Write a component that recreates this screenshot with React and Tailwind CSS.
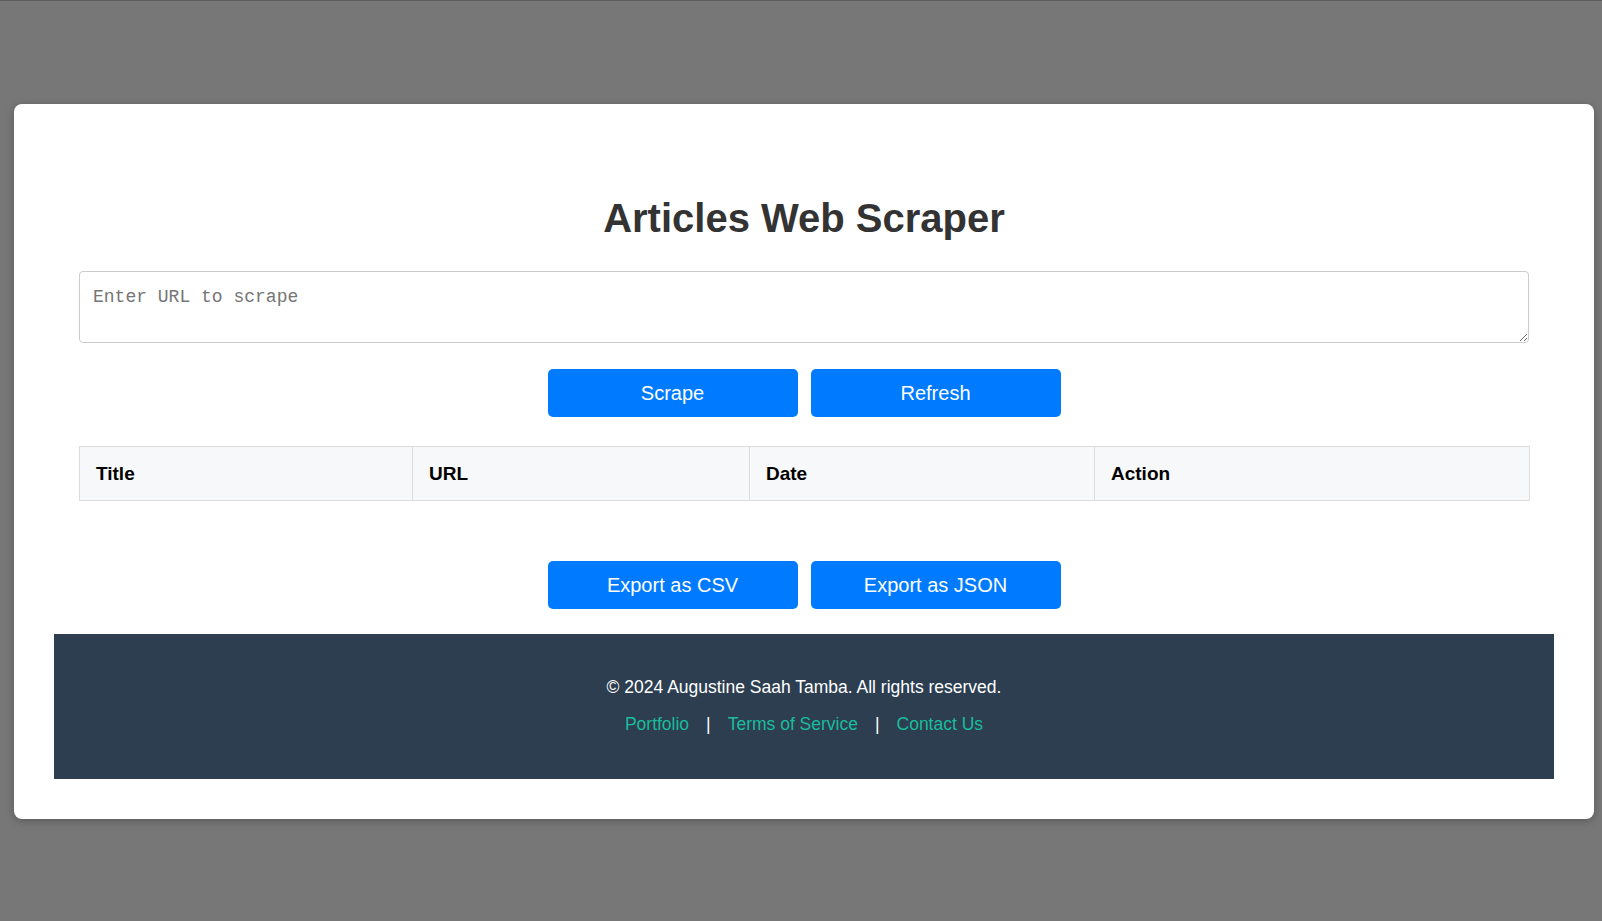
import { useState } from "react"

const columns = [
  { label: "Title", width: "w-[333px]" },
  { label: "URL", width: "w-[337px]" },
  { label: "Date", width: "w-[345px]" },
  { label: "Action", width: "w-[435px]" },
]

function BlueButton({ children }) {
  return (
    <button
      type="button"
      className="h-[48px] w-[250px] rounded-[5px] bg-[#007bff] text-[20px] text-white hover:bg-[#0069d9]"
    >
      {children}
    </button>
  )
}

export default function App() {
  const [url, setUrl] = useState("")

  return (
    <div className="min-h-[921px] border-t border-[#5c5c5c] bg-[#777777] pt-[103px] font-['Liberation_Sans',Arial,sans-serif]">
      <div className="ml-[14px] w-[1580px] rounded-[8px] bg-white p-[40px] shadow-[0_2px_8px_rgba(0,0,0,0.25)]">
        <h1 className="mt-[51px] text-center text-[40px] font-bold leading-[46px] text-[#333333]">
          Articles Web Scraper
        </h1>

        <div className="mx-[25px] mt-[30px]">
          <textarea
            value={url}
            onChange={(event) => setUrl(event.target.value)}
            placeholder="Enter URL to scrape"
            className="block h-[72px] w-full rounded-[4px] border border-[#cccccc] px-[13px] pb-[10px] pt-[14px] font-['Liberation_Mono',monospace] text-[18px] leading-[22px] text-[#333] placeholder:text-[#757575] focus:outline-none"
          />
        </div>

        <div className="mt-[26px] flex justify-center gap-[13px]">
          <BlueButton>Scrape</BlueButton>
          <BlueButton>Refresh</BlueButton>
        </div>

        <div className="mx-[25px] mt-[29px]">
          <table className="w-full table-fixed border-collapse">
            <thead>
              <tr className="bg-[#f7f8f9]">
                {columns.map((col) => (
                  <th
                    key={col.label}
                    className={`${col.width} h-[54px] border border-[#dddddd] px-[16px] pt-[2px] text-left text-[19px] font-bold text-black`}
                  >
                    {col.label}
                  </th>
                ))}
              </tr>
            </thead>
            <tbody />
          </table>
        </div>

        <div className="mt-[60px] flex justify-center gap-[13px]">
          <BlueButton>Export as CSV</BlueButton>
          <BlueButton>Export as JSON</BlueButton>
        </div>

        <footer className="mt-[25px] bg-[#2c3e50] pb-[44px] pt-[43px] text-center text-[17.5px] leading-[21px] text-white">
          <p>© 2024 Augustine Saah Tamba. All rights reserved.</p>
          <div className="mt-[16px] flex items-center justify-center">
            <a href="#" className="text-[#1abc9c]">Portfolio</a>
            <span className="mx-[17px]">|</span>
            <a href="#" className="text-[#1abc9c]">Terms of Service</a>
            <span className="mx-[17px]">|</span>
            <a href="#" className="text-[#1abc9c]">Contact Us</a>
          </div>
        </footer>
      </div>
    </div>
  )
}
